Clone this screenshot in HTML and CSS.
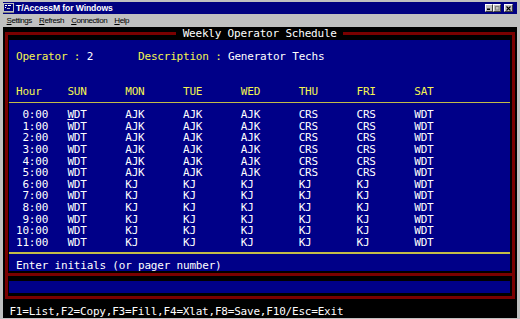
FILE: index.html
```html
<!DOCTYPE html>
<html lang="en">
<head>
    <meta charset="UTF-8">
    <meta name="viewport" content="width=device-width, initial-scale=1.0">
    <title>T/AccessM for Windows</title>
    <link rel="stylesheet" href="styles.css">
</head>
<body>
    <div class="window">
        <div class="titlebar">
            <svg class="app-icon" width="11" height="10" viewBox="0 0 11 10">
                <rect x="0" y="0" width="11" height="10" fill="#c0c0c0"/>
                <rect x="1" y="1" width="9" height="7" fill="#000080"/>
                <rect x="2" y="2" width="2" height="1" fill="#ffffff"/>
                <rect x="5" y="2" width="3" height="1" fill="#ffffff"/>
                <rect x="2" y="4" width="1" height="1" fill="#ffffff"/>
                <rect x="4" y="5" width="3" height="1" fill="#c0c0c0"/>
                <rect x="0" y="9" width="11" height="1" fill="#808080"/>
            </svg>
            <span class="title">T/AccessM for Windows</span>
            <div class="win-buttons">
                <span class="win-btn">
                    <svg width="4" height="4" viewBox="0 0 4 4"><rect x="0" y="2.5" width="3" height="1.5" fill="#000"/></svg>
                </span>
                <span class="win-btn">
                    <svg width="5" height="5" viewBox="0 0 5 5"><rect x="0.5" y="0.5" width="3.5" height="3.5" fill="none" stroke="#808080"/></svg>
                </span>
                <span class="win-btn btn-close">
                    <svg width="5" height="5" viewBox="0 0 5 5"><path d="M0.5 0.5 L4.5 4.5 M4.5 0.5 L0.5 4.5" stroke="#000" stroke-width="1.2"/></svg>
                </span>
            </div>
        </div>

        <div class="menubar">
            <span class="menu-item"><u>S</u>ettings</span>
            <span class="menu-item"><u>R</u>efresh</span>
            <span class="menu-item"><u>C</u>onnection</span>
            <span class="menu-item"><u>H</u>elp</span>
        </div>

        <div class="terminal">
            <fieldset class="frame">
                <legend class="frame-title">Weekly Operator Schedule</legend>
                <div class="panel">
                    <div class="info">
                        <span class="field field-operator"><span class="label">Operator : </span><span class="value">2</span></span>
                        <span class="field"><span class="label">Description : </span><span class="value">Generator Techs</span></span>
                    </div>

                    <div class="schedule head">
                        <span>Hour</span><span>SUN</span><span>MON</span><span>TUE</span><span>WED</span><span>THU</span><span>FRI</span><span>SAT</span>
                    </div>
                    <div class="rule"></div>

                    <div class="schedule">
                        <span class="hour">0:00</span><span><span class="cursor">W</span>DT</span><span>AJK</span><span>AJK</span><span>AJK</span><span>CRS</span><span>CRS</span><span>WDT</span>
                        <span class="hour">1:00</span><span>WDT</span><span>AJK</span><span>AJK</span><span>AJK</span><span>CRS</span><span>CRS</span><span>WDT</span>
                        <span class="hour">2:00</span><span>WDT</span><span>AJK</span><span>AJK</span><span>AJK</span><span>CRS</span><span>CRS</span><span>WDT</span>
                        <span class="hour">3:00</span><span>WDT</span><span>AJK</span><span>AJK</span><span>AJK</span><span>CRS</span><span>CRS</span><span>WDT</span>
                        <span class="hour">4:00</span><span>WDT</span><span>AJK</span><span>AJK</span><span>AJK</span><span>CRS</span><span>CRS</span><span>WDT</span>
                        <span class="hour">5:00</span><span>WDT</span><span>AJK</span><span>AJK</span><span>AJK</span><span>CRS</span><span>CRS</span><span>WDT</span>
                        <span class="hour">6:00</span><span>WDT</span><span>KJ</span><span>KJ</span><span>KJ</span><span>KJ</span><span>KJ</span><span>WDT</span>
                        <span class="hour">7:00</span><span>WDT</span><span>KJ</span><span>KJ</span><span>KJ</span><span>KJ</span><span>KJ</span><span>WDT</span>
                        <span class="hour">8:00</span><span>WDT</span><span>KJ</span><span>KJ</span><span>KJ</span><span>KJ</span><span>KJ</span><span>WDT</span>
                        <span class="hour">9:00</span><span>WDT</span><span>KJ</span><span>KJ</span><span>KJ</span><span>KJ</span><span>KJ</span><span>WDT</span>
                        <span class="hour">10:00</span><span>WDT</span><span>KJ</span><span>KJ</span><span>KJ</span><span>KJ</span><span>KJ</span><span>WDT</span>
                        <span class="hour">11:00</span><span>WDT</span><span>KJ</span><span>KJ</span><span>KJ</span><span>KJ</span><span>KJ</span><span>WDT</span>
                    </div>
                    <div class="rule"></div>

                    <div class="prompt">Enter initials (or pager number)</div>
                </div>
            </fieldset>

            <div class="frame-input">
                <div class="panel input-line"></div>
            </div>

            <div class="status">F1=List,F2=Copy,F3=Fill,F4=Xlat,F8=Save,F10/Esc=Exit</div>
        </div>
    </div>
</body>
</html>
```

FILE: styles.css
```css
body {
    margin: 0;
    background: #c0c0c0;
}

.window {
    width: 520px;
    height: 319px;
    box-sizing: border-box;
    padding: 2px 3px 1px 3px;
    display: flex;
    flex-direction: column;
    background: #c0c0c0;
}

/* title bar */
.titlebar {
    height: 12px;
    flex: none;
    background: #000080;
    display: flex;
    align-items: center;
    padding-right: 4px;
}

.app-icon {
    display: block;
    margin: 0 2px 0 0;
}

.title {
    color: #fff;
    font: bold 8.6px "Liberation Sans", Arial, sans-serif;
    letter-spacing: -0.1px;
    white-space: nowrap;
}

.win-buttons {
    margin-left: auto;
    display: flex;
}

.win-btn {
    width: 8px;
    height: 8px;
    box-sizing: border-box;
    background: #c0c0c0;
    border-top: 1px solid #fff;
    border-left: 1px solid #fff;
    border-right: 1px solid #404040;
    border-bottom: 1px solid #404040;
    display: flex;
    align-items: center;
    justify-content: center;
}

.win-btn svg {
    display: block;
}

.btn-close {
    width: 9px;
    margin-left: 3px;
}

/* menu */
.menubar {
    height: 13px;
    flex: none;
    display: flex;
    align-items: center;
    font: 8px "Liberation Sans", Arial, sans-serif;
    letter-spacing: -0.45px;
    color: #000;
}

.menu-item {
    padding: 0 3.6px;
}

/* terminal */
.terminal {
    flex: 1;
    background: #000;
    display: flex;
    flex-direction: column;
    padding-top: 1px;
    font-family: "DejaVu Sans Mono", monospace;
    font-size: 11px;
    letter-spacing: -0.2px;
    line-height: 11.6px;
    color: #fff;
    --cw: 6.425px;
}

.frame {
    margin: 0 2px;
    padding: 0 1.6px 1.5px 1px;
    border: 3px solid #7a0000;
    min-inline-size: 0;
}

.frame-title {
    margin: 0 auto;
    padding: 0 6.4px;
    background: #000;
    color: #fff;
    line-height: 11.6px;
    white-space: pre;
}

.panel {
    background: #000088;
    padding: 11.6px 0 0 7px;
}

.info {
    display: flex;
    white-space: pre;
}

.field-operator {
    width: calc(var(--cw) * 19);
}

.label {
    color: #f4f450;
}

.value {
    color: #fff;
}

.schedule {
    display: grid;
    grid-template-columns: calc(var(--cw) * 8) repeat(7, calc(var(--cw) * 9));
    white-space: pre;
}

.schedule.head {
    margin-top: 23.2px;
    color: #f4f450;
}

.hour {
    width: calc(var(--cw) * 5);
    text-align: right;
}

.cursor {
    text-decoration: underline;
    text-underline-offset: 1px;
}

.rule {
    height: 1.5px;
    margin: 4px 0 6.1px -7px;
    background: #c4bc48;
}

.prompt {
    white-space: pre;
}

.frame-input {
    margin: 0 2px;
    padding: 5px 1.6px 3px 1px;
    border: 3px solid #7a0000;
    border-top: none;
}

.input-line {
    height: 12px;
    padding: 0;
}

.status {
    margin-top: auto;
    padding-left: 6.4px;
    white-space: pre;
}
```
